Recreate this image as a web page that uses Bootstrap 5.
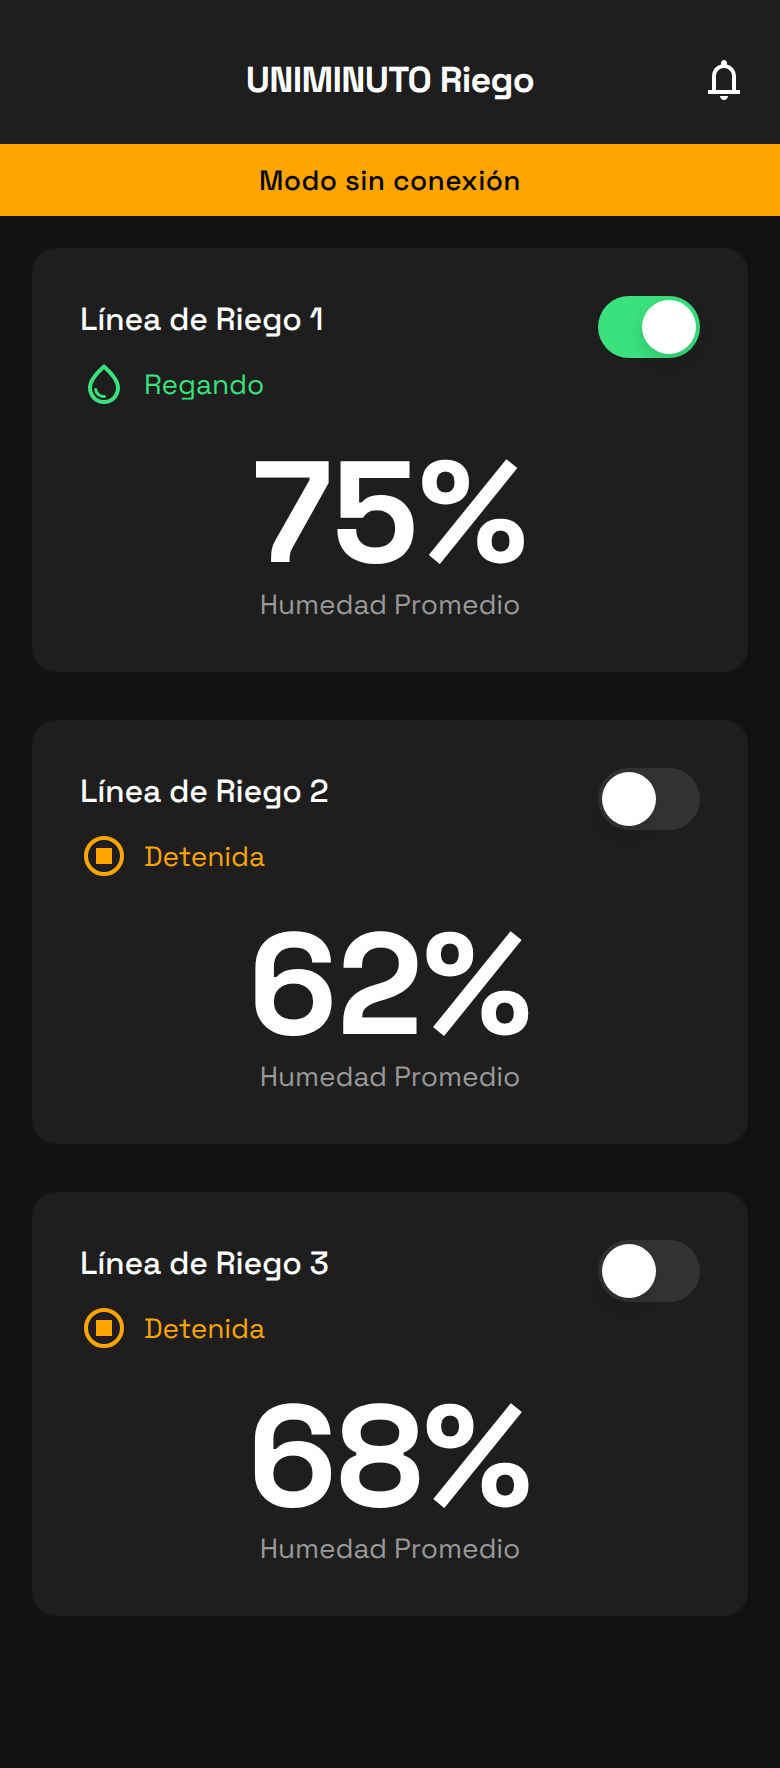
<!DOCTYPE html>
<html lang="es" data-bs-theme="dark">
<head>
<meta charset="utf-8">
<meta name="viewport" content="width=device-width, initial-scale=1">
<title>UNIMINUTO Riego</title>
<link href="https://cdn.jsdelivr.net/npm/bootstrap@5.3.0/dist/css/bootstrap.min.css" rel="stylesheet">
<style>
  body { background: #121212; color: #fff; font-family: "Space Grotesk", Inter, sans-serif; min-height: 1768px; text-rendering: geometricPrecision; }
  .surface { background: #1e1e1e; }
  .app-header { height: 144px; padding: 56px 32px 40px; display: grid; grid-template-columns: 48px 1fr 48px; }
  .app-title { font-size: 36px; line-height: 48px; font-weight: 700; letter-spacing: -.72px; }
  .offline { height: 72px; padding-top: 2px; background: #ffa500; color: #000; font-size: 28px; font-weight: 500; letter-spacing: .42px; }
  .lines { padding: 32px; gap: 48px; }
  .line-card { padding: 48px; border-radius: 24px; }
  .line-name { font-size: 32px; line-height: 48px; font-weight: 500; margin: 0 0 16px; letter-spacing: -.26px; }
  .status { height: 48px; gap: 16px; font-size: 28px; line-height: 48px; letter-spacing: -.08px; }
  .status span { padding-top: 2px; }
  .on { color: #3ae17d; }
  .off { color: #ffa500; }
  .toggle { width: 102px; height: 62px; border-radius: 31px; padding: 4px; background: #333; }
  .toggle[aria-checked="true"] { background: #3ae17d; justify-content: flex-end; }
  .knob { width: 54px; height: 54px; border-radius: 50%; background: #fff; box-shadow: 0 6px 16px rgba(0,0,0,.15); }
  .humidity { font-size: 144px; line-height: 144px; font-weight: 700; margin-top: 33px; font-kerning: none; }
  .caption-text { font-size: 28px; line-height: 40px; color: #999; margin-bottom: -1px; letter-spacing: -.1px; }
  .ico { width: 48px; height: 48px; fill: currentColor; flex: none; display: block; }
</style>
</head>
<body>
<svg class="d-none">
  <symbol id="drop" viewBox="0 0 24 24"><path d="M12.275 19q.3-.025.513-.238T13 18.25q0-.35-.225-.562T12.2 17.5q-1.025.075-2.175-.562T8.575 14.625q-.05-.275-.262-.45T7.825 14q-.35 0-.575.263t-.15.612q.425 2.275 2 3.25t3.175.875M12 22q-3.425 0-5.712-2.35T4 13.8q0-2.5 1.988-5.437T12 2q4.025 3.425 6.013 6.363T20 13.8q0 3.5-2.287 5.85T12 22m0-2q2.6 0 4.3-1.763T18 13.8q0-1.825-1.513-4.125T12 4.65Q9.025 7.375 7.513 9.675T6 13.8q0 2.675 1.7 4.438T12 20"/></symbol>
  <symbol id="stop" viewBox="0 0 24 24"><circle cx="12" cy="12" r="9" fill="none" stroke="currentColor" stroke-width="2"/><path d="M8 8h8v8H8z"/></symbol>
</svg>

<header class="app-header surface">
  <span></span>
  <h1 class="app-title m-0 text-center text-nowrap">UNIMINUTO Riego</h1>
  <svg class="ico" viewBox="0 0 24 24" aria-label="Notificaciones"><path d="M4 19v-2h2v-7q0-2.075 1.25-3.688T10.5 4.2v-.7q0-.625.438-1.062T12 2t1.063.438T13.5 3.5v.7q2 .5 3.25 2.113T18 10v7h2v2zm8 3q-.825 0-1.412-.587T10 20h4q0 .825-.587 1.413T12 22m-4-5h8v-7q0-1.65-1.175-2.825T12 6T9.175 7.175T8 10z"/></svg>
</header>
<div class="offline d-flex align-items-center justify-content-center">Modo sin conexión</div>

<main class="lines d-flex flex-column">
  <section class="line-card surface">
    <div class="d-flex justify-content-between align-items-start">
      <div>
        <h2 class="line-name">Línea de Riego 1</h2>
        <div class="status on d-flex align-items-center"><svg class="ico"><use href="#drop"/></svg><span>Regando</span></div>
      </div>
      <button class="toggle border-0 d-flex" type="button" role="switch" aria-checked="true"><span class="knob"></span></button>
    </div>
    <div class="humidity text-center">75%</div>
    <div class="caption-text text-center">Humedad Promedio</div>
  </section>

  <section class="line-card surface">
    <div class="d-flex justify-content-between align-items-start">
      <div>
        <h2 class="line-name">Línea de Riego 2</h2>
        <div class="status off d-flex align-items-center"><svg class="ico"><use href="#stop"/></svg><span>Detenida</span></div>
      </div>
      <button class="toggle border-0 d-flex" type="button" role="switch" aria-checked="false"><span class="knob"></span></button>
    </div>
    <div class="humidity text-center">62%</div>
    <div class="caption-text text-center">Humedad Promedio</div>
  </section>

  <section class="line-card surface">
    <div class="d-flex justify-content-between align-items-start">
      <div>
        <h2 class="line-name">Línea de Riego 3</h2>
        <div class="status off d-flex align-items-center"><svg class="ico"><use href="#stop"/></svg><span>Detenida</span></div>
      </div>
      <button class="toggle border-0 d-flex" type="button" role="switch" aria-checked="false"><span class="knob"></span></button>
    </div>
    <div class="humidity text-center">68%</div>
    <div class="caption-text text-center">Humedad Promedio</div>
  </section>
</main>
<script src="https://cdn.jsdelivr.net/npm/bootstrap@5.3.0/dist/js/bootstrap.bundle.min.js"></script>
</body>
</html>
